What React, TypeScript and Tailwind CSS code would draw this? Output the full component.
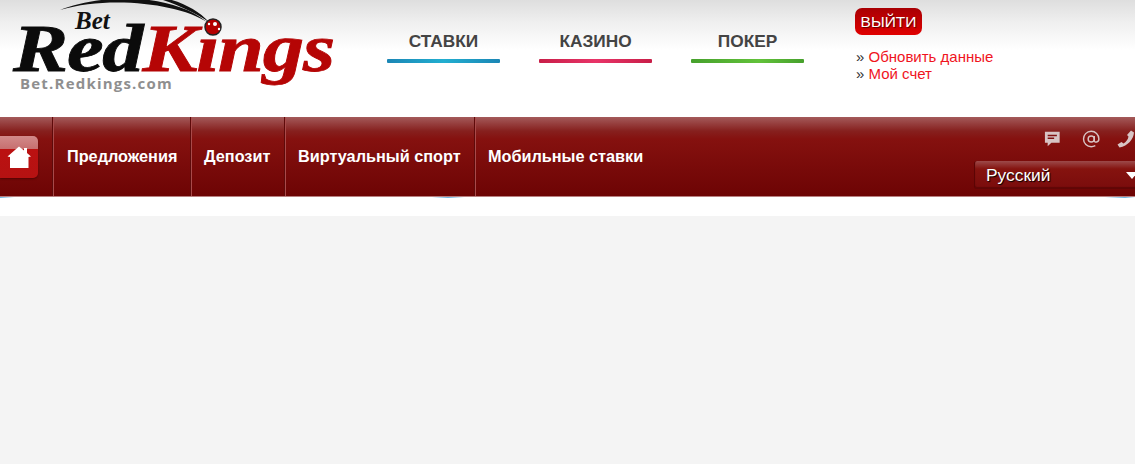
const sections = [
  { label: "СТАВКИ", bar: "bg-[linear-gradient(90deg,#1b86b5,#22aed0_50%,#1b86b5)]" },
  { label: "КАЗИНО", bar: "bg-[linear-gradient(90deg,#c81e48,#e83468_50%,#c81e48)]" },
  { label: "ПОКЕР", bar: "bg-[linear-gradient(90deg,#46a02c,#62c23a_60%,#46a02c)]" },
];

const menu = [
  { label: "Предложения", width: "w-[138px] pl-[14px]" },
  { label: "Депозит", width: "w-[94px] pl-[13px]" },
  { label: "Виртуальный спорт", width: "w-[190px] pl-[13px]" },
  { label: "Мобильные ставки", width: "w-[190px] pl-[13px]" },
];

const divider = "border-r border-r-[#5e0a0a] shadow-[1px_0_0_#a84a4a]";

function Logo() {
  return (
    <div className="relative h-[117px] w-[387px] shrink-0 overflow-hidden">
      <span className="absolute left-[75px] top-[14px] font-['Liberation_Serif',serif] text-[25px] font-bold italic leading-[14px] text-[#111]">
        Bet
      </span>
      <div className="absolute left-[13px] top-[28px] origin-left scale-x-[1.215] whitespace-nowrap font-['Liberation_Serif',serif] text-[68px] font-bold italic leading-[40px] tracking-[-1px] [-webkit-text-stroke:0.8px_currentColor]">
        <span className="text-[#0b0b0b]">Red</span>
        <span className="text-[#b50505]">Kings</span>
      </div>
      <svg className="absolute left-0 top-0" width="240" height="40" viewBox="0 0 240 40">
        <path d="M60 10C100 -6 170 -8 207 22C180 4 110 -5 60 10Z" fill="#111" />
        <path d="M150 -4C175 -2 196 8 209 22C194 12 172 2 150 -4Z" fill="#111" />
        <circle cx="213" cy="27" r="8" fill="#b40000" stroke="#222" strokeWidth="1.5" />
        <circle cx="215" cy="24" r="2" fill="#fff" />
        <circle cx="219" cy="29" r="1.2" fill="#fff" />
        <circle cx="209" cy="24" r="1.2" fill="#fff" />
      </svg>
      <span className="absolute left-[20px] top-[76px] font-['Open_Sans',sans-serif] text-[15px] font-bold leading-[14px] tracking-[1.2px] text-[#8f8f8f]">
        Bet.Redkings.com
      </span>
    </div>
  );
}

function HomeButton() {
  return (
    <div className={`flex h-full w-[53px] shrink-0 items-center ${divider}`}>
      <div className="flex h-[42px] w-[38px] items-center justify-center rounded-r-[5px] bg-[linear-gradient(180deg,#d28a8a_0,#c77070_30%,#bb1111_32%,#b51212_100%)] shadow-[0_1px_2px_rgba(60,0,0,0.6)]">
        <svg width="24" height="24" viewBox="0 0 24 24" fill="#fff">
          <path d="M12 1.5L17 5.6V3H20V8.1L24 11.5L21.5 12V23H3V12L0.5 11.5L12 1.5Z" />
        </svg>
      </div>
    </div>
  );
}

function ToolIcons() {
  return (
    <div className="flex h-[44px] items-center pl-[70px] text-[#d8c4c4]">
      <svg width="18" height="18" viewBox="0 0 18 18" fill="currentColor">
        <path d="M1 1H17V13H8L4 17V13H1Z" />
        <path d="M4 4.5H14V6H4ZM4 7.5H11V9H4Z" fill="#7f1010" />
      </svg>
      <svg className="ml-[21px]" width="20" height="20" viewBox="0 0 18 18" fill="none" stroke="currentColor" strokeWidth="1.4">
        <circle cx="9" cy="9" r="3" />
        <path d="M12 6V10.5C12 13 16.5 12.5 16.5 9C16.5 4.5 13 1.5 9 1.5C4.5 1.5 1.5 5 1.5 9C1.5 13.5 5 16.5 9 16.5C10.5 16.5 12 16 13 15.5" />
      </svg>
      <svg className="ml-[17px] shrink-0" width="18" height="18" viewBox="0 0 18 18" fill="currentColor">
        <path d="M14 0.5L17 2.5C16.5 9 11 16 2.5 17.5L0.5 14.5L4.5 12L6.5 13.5C9 12 11 9.5 11.5 6.5L10 5Z" />
      </svg>
    </div>
  );
}

export default function App() {
  return (
    <div className="flex h-[464px] w-[1135px] flex-col overflow-hidden bg-[#f4f4f4] font-['Liberation_Sans',sans-serif]">
      <header className="flex h-[117px] shrink-0 bg-[linear-gradient(180deg,#dedede_0,#efefef_22px,#ffffff_50px)]">
        <Logo />
        <div className="flex gap-[39px]">
          {sections.map((s) => (
            <div key={s.label} className="flex w-[113px] flex-col items-center pt-[31px]">
              <span className="text-[17.3px] font-bold leading-[20px] text-[#444]">{s.label}</span>
              <span className={`mt-[8px] h-[4px] w-full rounded-[1px] ${s.bar}`} />
            </div>
          ))}
        </div>
        <div className="ml-[51px] flex flex-col items-start pt-[8px]">
          <span className="flex h-[27px] w-[67px] items-center justify-center rounded-[7px] bg-[linear-gradient(180deg,#a80004,#e00000)] text-[15.5px] text-white [text-shadow:1px_1px_1px_rgba(60,0,0,0.8)]">
            ВЫЙТИ
          </span>
          <div className="mt-[13px] pl-px text-[15px] leading-[17px] text-[#333]">
            <p>
              » <a className="text-[#f0141e]">Обновить данные</a>
            </p>
            <p>
              » <a className="text-[#f0141e]">Мой счет</a>
            </p>
          </div>
        </div>
      </header>

      <nav className="flex h-[80px] shrink-0 border-b border-b-[#b98080] bg-[linear-gradient(180deg,#a45a5a_0,#86201e_14px,#85110f_22px,#6d0404_100%)]">
        <HomeButton />
        {menu.map((m, i) => (
          <div
            key={m.label}
            className={`flex h-full shrink-0 items-center text-[16.25px] font-bold text-white ${m.width} ${
              i < 3 ? divider : ""
            }`}
          >
            {m.label}
          </div>
        ))}
        <div className="ml-auto w-[161px] shrink-0 overflow-hidden">
          <ToolIcons />
          <div className="flex h-[28px] w-[175px] items-center rounded-l-[3px] border-l border-l-[#5c0404] bg-[linear-gradient(180deg,#9c4a4a_0,#85130f_8px,#7a0c0c_100%)] pl-[11px] shadow-[inset_0_-2px_1px_rgba(70,0,0,0.5)]">
            <span className="text-[17.4px] leading-[24px] text-white [text-shadow:1px_1px_1px_#000]">Русский</span>
            <span className="ml-[75px] h-0 w-0 border-x-[6px] border-t-[7px] border-x-transparent border-t-white" />
          </div>
        </div>
      </nav>

      <div className="h-[19px] shrink-0 bg-white">
        <div className="h-px bg-[linear-gradient(90deg,#6bb4e0_0,#ffffff_14px,#ffffff_432px,#6bb4e0_448px,#ffffff_464px,#ffffff_1105px,#6bb4e0_1125px,#ffffff_1135px)]" />
      </div>
    </div>
  );
}
